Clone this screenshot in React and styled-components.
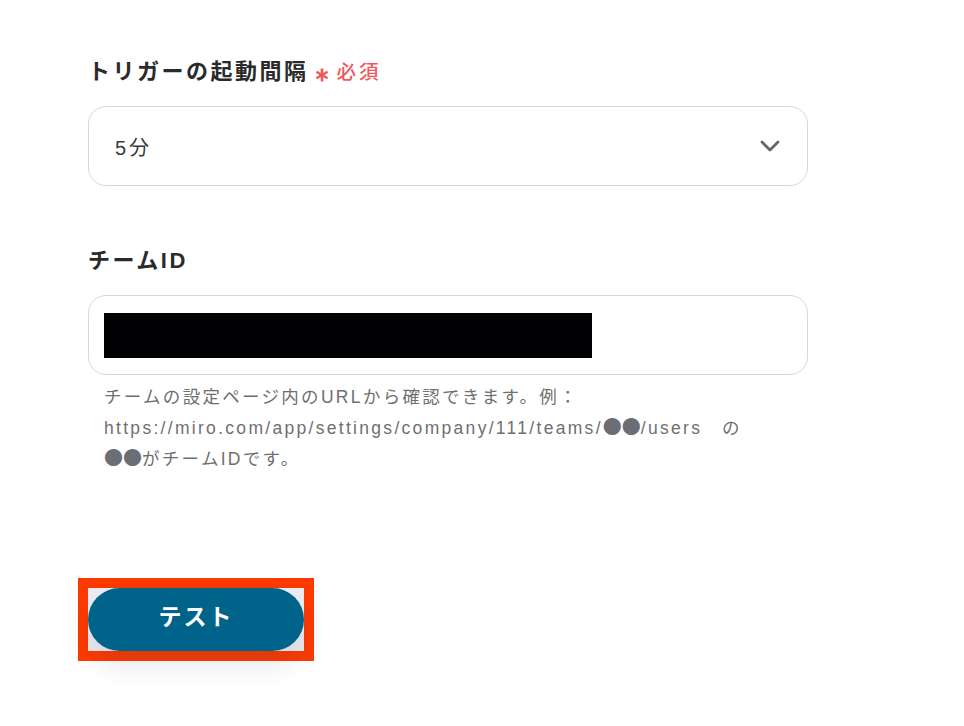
import styled, { createGlobalStyle } from 'styled-components';

const GlobalStyle = createGlobalStyle`
    html, body {
        margin: 0;
        padding: 0;
        background: #ffffff;
    }
    body {
        font-family: "Liberation Sans", "Noto Sans CJK JP", sans-serif;
        color: #2b2b2b;
    }
`;

const Page = styled.div`
    width: 964px;
    height: 726px;
    box-sizing: border-box;
    padding: 55px 0 0 88px;
    display: flex;
    flex-direction: column;
`;

const Field = styled.div`
    width: 720px;
    display: flex;
    flex-direction: column;
    margin-bottom: ${props => props.$gap || 0}px;
`;

const Label = styled.div`
    display: flex;
    align-items: center;
    gap: 6px;
    font-size: 22px;
    font-weight: 700;
    letter-spacing: 2.5px;
    line-height: 34px;
    color: #2a2a2a;
    margin-bottom: 17px;
`;

const Required = styled.span`
    display: flex;
    align-items: center;
    gap: 8px;
    color: #f2575c;
    font-size: 19.5px;
    font-weight: 500;
    letter-spacing: 3px;
`;

const Box = styled.div`
    height: 80px;
    box-sizing: border-box;
    border: 1px solid #d3d9e3;
    border-radius: 18px;
    background: #ffffff;
    display: flex;
    align-items: center;
    justify-content: space-between;
    padding: 0 27px 0 ${props => props.$padLeft || 26}px;
`;

const Value = styled.span`
    font-size: 20px;
    letter-spacing: 3px;
    color: #3a3a3a;
`;

const Redacted = styled.div`
    width: 488px;
    height: 45px;
    background: #020104;
`;

const Help = styled.p`
    margin: 7px 0 0 16px;
    font-size: 17.5px;
    letter-spacing: 2.3px;
    line-height: 31px;
    color: #6f6f6f;
`;

const Dot = styled.span`
    font-family: "Noto Sans CJK JP", sans-serif;
    font-size: 19px;
    line-height: 1;
    color: #6c6e76;
    letter-spacing: 0;
`;

const ButtonFrame = styled.div`
    margin-top: 103px;
    margin-left: -10px;
    align-self: flex-start;
    border: 10px solid #fc3a00;
    background: #ececf1;
    display: flex;
`;

const TestButton = styled.button`
    width: 216px;
    height: 63px;
    border: none;
    border-radius: 32px;
    background: #00648a;
    color: #ffffff;
    font-family: inherit;
    font-size: 23px;
    font-weight: 700;
    letter-spacing: 2px;
    line-height: 1;
    padding: 0 0 4px;
    box-shadow: 0 14px 26px rgba(40, 50, 90, 0.12);
    cursor: pointer;
`;

const Star = () => (
    <svg width="14" height="14" viewBox="0 0 14 14" style={{ marginTop: 6 }}>
        <g stroke="#f2575c" strokeWidth="2.6" strokeLinecap="butt">
            <line x1="7" y1="0.5" x2="7" y2="13.5" />
            <line x1="1.4" y1="3.75" x2="12.6" y2="10.25" />
            <line x1="1.4" y1="10.25" x2="12.6" y2="3.75" />
        </g>
    </svg>
);

const Chevron = () => (
    <svg width="20" height="12" viewBox="0 0 20 12" fill="none">
        <path d="M2 2 L10 10 L18 2" stroke="#666" strokeWidth="2.8" strokeLinecap="round" strokeLinejoin="round" />
    </svg>
);

export default function App() {
    return (
        <>
            <GlobalStyle />
            <Page>
                <Field $gap={58}>
                    <Label>
                        トリガーの起動間隔
                        <Required>
                            <Star />
                            必須
                        </Required>
                    </Label>
                    <Box>
                        <Value>5分</Value>
                        <Chevron />
                    </Box>
                </Field>
                <Field>
                    <Label>チームID</Label>
                    <Box $padLeft={15}>
                        <Redacted />
                    </Box>
                    <Help>
                        チームの設定ページ内のURLから確認できます。例：<br />
                        https://miro.com/app/settings/company/111/teams/<Dot>●●</Dot>/users　の<br />
                        <Dot>●●</Dot>がチームIDです。
                    </Help>
                </Field>
                <ButtonFrame>
                    <TestButton>テスト</TestButton>
                </ButtonFrame>
            </Page>
        </>
    );
}
